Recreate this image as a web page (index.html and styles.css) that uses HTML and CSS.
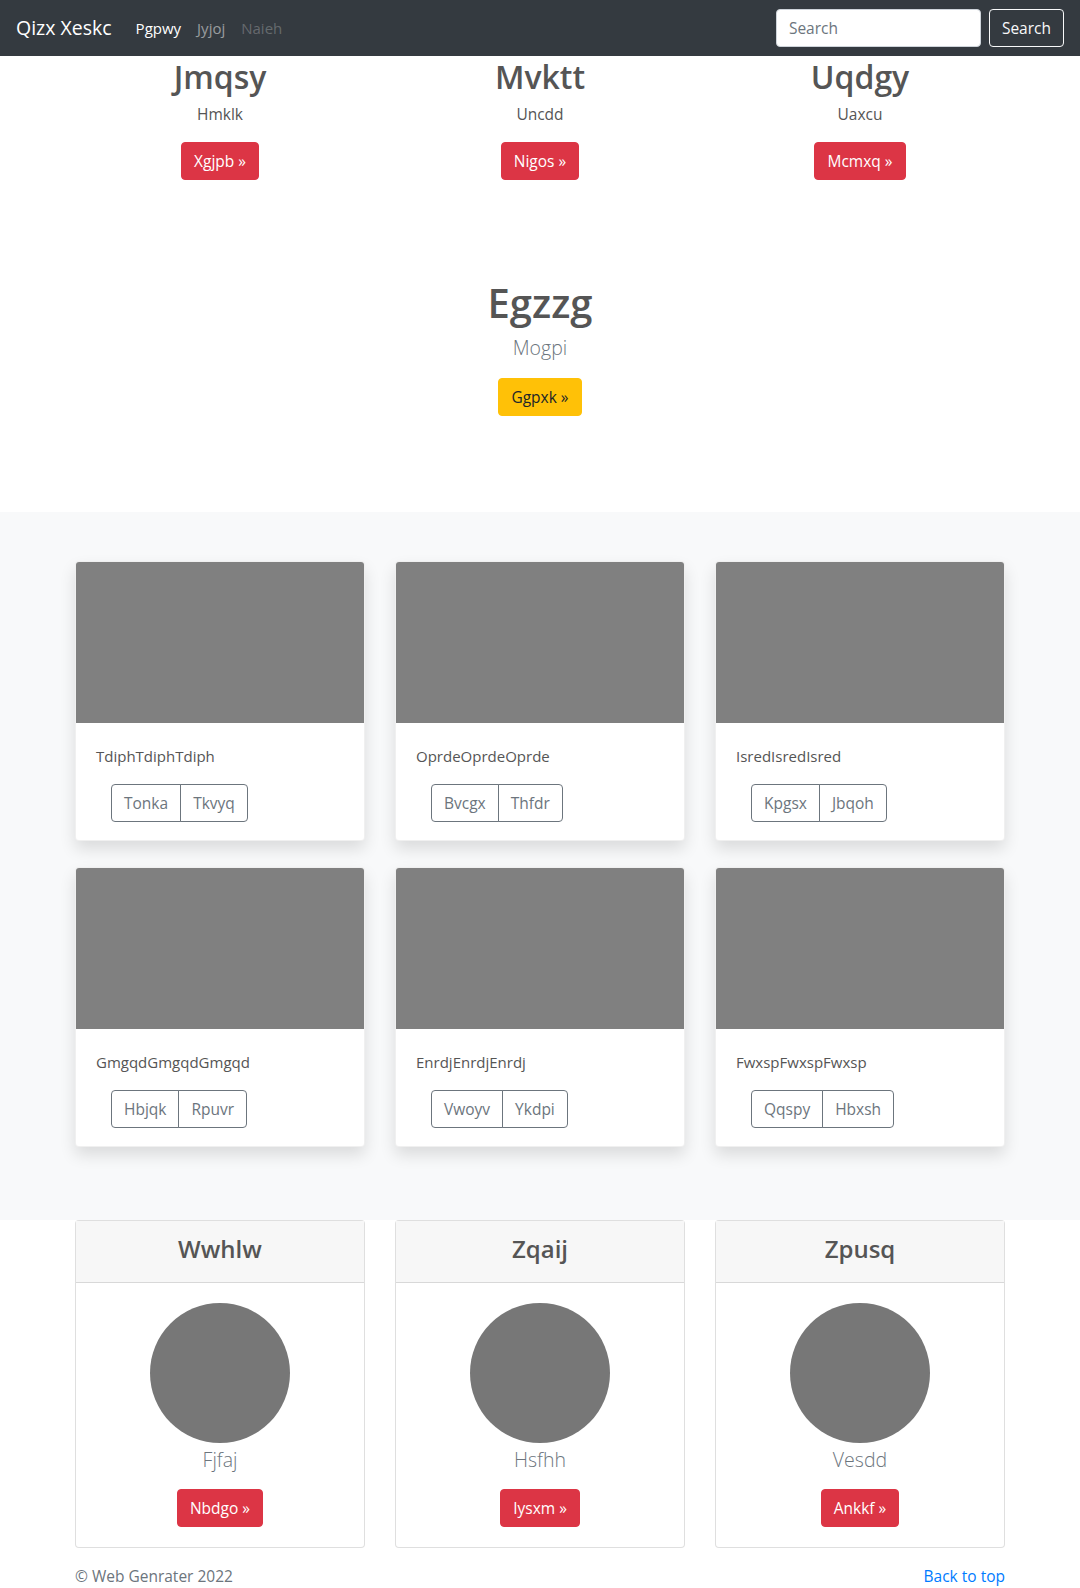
FILE: index.html
```html
<!DOCTYPE html>
<html lang="en">
<head>
<meta charset="utf-8">
<title>Qizx Xeskc</title>
<link rel="stylesheet" href="styles.css">
</head>
<body>
<nav class="navbar">
  <a class="brand" href="#">Qizx Xeskc</a>
  <ul class="nav-links">
    <li><a class="nav-link active" href="#">Pgpwy</a></li>
    <li><a class="nav-link" href="#">Jyjoj</a></li>
    <li><a class="nav-link disabled" href="#">Naieh</a></li>
  </ul>
  <form class="search-form">
    <input class="search-input" type="text" placeholder="Search">
    <button class="btn btn-outline-light" type="button">Search</button>
  </form>
</nav>

<main>
  <section class="features container">
    <div class="row">
      <div class="col feature">
        <h2 class="feature-title">Jmqsy</h2>
        <p class="feature-text">Hmklk</p>
        <a class="btn btn-danger" href="#">Xgjpb &raquo;</a>
      </div>
      <div class="col feature">
        <h2 class="feature-title">Mvktt</h2>
        <p class="feature-text">Uncdd</p>
        <a class="btn btn-danger" href="#">Nigos &raquo;</a>
      </div>
      <div class="col feature">
        <h2 class="feature-title">Uqdgy</h2>
        <p class="feature-text">Uaxcu</p>
        <a class="btn btn-danger" href="#">Mcmxq &raquo;</a>
      </div>
    </div>
  </section>

  <section class="hero">
    <h1 class="hero-title">Egzzg</h1>
    <p class="lead">Mogpi</p>
    <a class="btn btn-warning" href="#">Ggpxk &raquo;</a>
  </section>

  <section class="album">
    <div class="container">
      <div class="grid">
        <div class="card shadow">
          <div class="card-img"></div>
          <div class="card-body">
            <p class="card-text">TdiphTdiphTdiph</p>
            <div class="btn-group">
              <button class="btn btn-outline-secondary" type="button">Tonka</button>
              <button class="btn btn-outline-secondary" type="button">Tkvyq</button>
            </div>
          </div>
        </div>
        <div class="card shadow">
          <div class="card-img"></div>
          <div class="card-body">
            <p class="card-text">OprdeOprdeOprde</p>
            <div class="btn-group">
              <button class="btn btn-outline-secondary" type="button">Bvcgx</button>
              <button class="btn btn-outline-secondary" type="button">Thfdr</button>
            </div>
          </div>
        </div>
        <div class="card shadow">
          <div class="card-img"></div>
          <div class="card-body">
            <p class="card-text">IsredIsredIsred</p>
            <div class="btn-group">
              <button class="btn btn-outline-secondary" type="button">Kpgsx</button>
              <button class="btn btn-outline-secondary" type="button">Jbqoh</button>
            </div>
          </div>
        </div>
        <div class="card shadow">
          <div class="card-img"></div>
          <div class="card-body">
            <p class="card-text">GmgqdGmgqdGmgqd</p>
            <div class="btn-group">
              <button class="btn btn-outline-secondary" type="button">Hbjqk</button>
              <button class="btn btn-outline-secondary" type="button">Rpuvr</button>
            </div>
          </div>
        </div>
        <div class="card shadow">
          <div class="card-img"></div>
          <div class="card-body">
            <p class="card-text">EnrdjEnrdjEnrdj</p>
            <div class="btn-group">
              <button class="btn btn-outline-secondary" type="button">Vwoyv</button>
              <button class="btn btn-outline-secondary" type="button">Ykdpi</button>
            </div>
          </div>
        </div>
        <div class="card shadow">
          <div class="card-img"></div>
          <div class="card-body">
            <p class="card-text">FwxspFwxspFwxsp</p>
            <div class="btn-group">
              <button class="btn btn-outline-secondary" type="button">Qqspy</button>
              <button class="btn btn-outline-secondary" type="button">Hbxsh</button>
            </div>
          </div>
        </div>
      </div>
    </div>
  </section>

  <section class="team container">
    <div class="row">
      <div class="col">
        <div class="card profile">
          <div class="card-header"><h4 class="profile-title">Wwhlw</h4></div>
          <div class="profile-body">
            <div class="avatar"></div>
            <p class="lead">Fjfaj</p>
            <a class="btn btn-danger" href="#">Nbdgo &raquo;</a>
          </div>
        </div>
      </div>
      <div class="col">
        <div class="card profile">
          <div class="card-header"><h4 class="profile-title">Zqaij</h4></div>
          <div class="profile-body">
            <div class="avatar"></div>
            <p class="lead">Hsfhh</p>
            <a class="btn btn-danger" href="#">Iysxm &raquo;</a>
          </div>
        </div>
      </div>
      <div class="col">
        <div class="card profile">
          <div class="card-header"><h4 class="profile-title">Zpusq</h4></div>
          <div class="profile-body">
            <div class="avatar"></div>
            <p class="lead">Vesdd</p>
            <a class="btn btn-danger" href="#">Ankkf &raquo;</a>
          </div>
        </div>
      </div>
    </div>
  </section>

  <footer class="footer container">
    <span class="copyright">&copy; Web Genrater 2022</span>
    <a class="back-top" href="#">Back to top</a>
  </footer>
</main>
</body>
</html>
```

FILE: styles.css
```css
* { box-sizing: border-box; }

html, body {
  margin: 0;
  padding: 0;
}

body {
  font-family: "Open Sans", "Noto Sans", "Liberation Sans", sans-serif;
  font-size: 15.5px;
  line-height: 1.5;
  color: #555;
  background: #fff;
}

a { text-decoration: none; }

/* Navbar */
.navbar {
  height: 56px;
  background: #343a40;
  display: flex;
  align-items: center;
  padding: 0 16px;
}

.brand {
  color: #fff;
  font-size: 19.5px;
  margin-right: 16px;
  white-space: nowrap;
}

.nav-links {
  list-style: none;
  display: flex;
  margin: 0;
  padding: 0;
  flex: 1;
}

.nav-link {
  display: block;
  padding: 8px 8px;
  color: rgba(255,255,255,.5);
  font-size: 15px;
}

.nav-link.active { color: #fff; }
.nav-link.disabled { color: rgba(255,255,255,.25); }

.search-form {
  display: flex;
  align-items: center;
}

.search-input {
  width: 205px;
  height: 38px;
  padding: 6px 12px;
  border: 1px solid #ced4da;
  border-radius: 4px;
  font-family: inherit;
  font-size: 15.5px;
  color: #495057;
  margin-right: 8px;
}

.search-input::placeholder { color: #6c757d; }

/* Buttons */
.btn {
  display: inline-block;
  font-family: inherit;
  font-size: 15.5px;
  line-height: 24px;
  padding: 6px 12px;
  border: 1px solid transparent;
  border-radius: 4px;
  background: transparent;
  cursor: pointer;
  white-space: nowrap;
}

.btn-outline-light {
  color: #f8f9fa;
  border-color: #f8f9fa;
}

.btn-danger {
  background: #dc3545;
  border-color: #dc3545;
  color: #fff;
}

.btn-warning {
  background: #ffc107;
  border-color: #ffc107;
  color: #212529;
}

.btn-outline-secondary {
  color: #6c757d;
  border-color: #6c757d;
}

.btn-group {
  display: inline-flex;
  margin-left: 15px;
}

.btn-group .btn:first-child {
  border-top-right-radius: 0;
  border-bottom-right-radius: 0;
}

.btn-group .btn + .btn {
  margin-left: -1px;
  border-top-left-radius: 0;
  border-bottom-left-radius: 0;
}

/* Layout */
.container {
  width: 960px;
  margin: 0 auto;
  padding: 0 15px;
}

.row {
  display: grid;
  grid-template-columns: repeat(3, 1fr);
  column-gap: 30px;
}

/* Features */
.feature { text-align: center; }

.feature-title {
  font-size: 32px;
  font-weight: 600;
  line-height: 1.2;
  margin: 2px 0 7px;
  color: #555;
}

.feature-text {
  margin: 0 0 15px;
}

/* Hero */
.hero {
  text-align: center;
  padding: 99px 0 96px;
}

.hero-title {
  font-size: 40px;
  font-weight: 600;
  line-height: 1.2;
  margin: 0 0 8px;
  color: #555;
}

.lead {
  font-size: 19.5px;
  font-weight: 300;
  line-height: 30px;
  color: #6c757d;
  margin: 0 0 14px;
}

.hero .lead { margin: -2px 0 15px; }

/* Album */
.album {
  background: #f8f9fa;
  padding: 49px 0 73px;
}

.grid {
  display: grid;
  grid-template-columns: repeat(3, 1fr);
  column-gap: 30px;
  row-gap: 26px;
}

.card {
  background: #fff;
  border: 1px solid rgba(0,0,0,.125);
  border-radius: 4px;
  overflow: hidden;
}

.card.shadow {
  border-color: rgba(0,0,0,.06);
  box-shadow: 0 .5rem 1rem rgba(0,0,0,.12);
}

.card-img {
  height: 161px;
  background: #808080;
}

.card-body {
  padding: 21px 20px 18px;
}

.card-text {
  margin: 0 0 16px;
  font-size: 15px;
  line-height: 24px;
}

/* Team */
.team .card { overflow: visible; }

.card-header {
  background: #f7f7f7;
  border-bottom: 1px solid rgba(0,0,0,.125);
  padding: 14px 20px;
  text-align: center;
  height: 62px;
}

.profile-title {
  margin: 0;
  font-size: 24px;
  font-weight: 600;
  line-height: 28.8px;
  color: #555;
}

.profile-body {
  padding: 20px 20px 20px;
  display: flex;
  flex-direction: column;
  align-items: center;
}

.avatar {
  width: 140px;
  height: 140px;
  border-radius: 50%;
  background: #777;
}

.profile-body .lead { margin: 2px 0 14px; }

/* Footer */
.footer {
  display: flex;
  justify-content: space-between;
  padding-top: 16px;
  padding-bottom: 24px;
  line-height: 24px;
}

.copyright { color: #6c757d; }

.back-top { color: #007bff; }
```
